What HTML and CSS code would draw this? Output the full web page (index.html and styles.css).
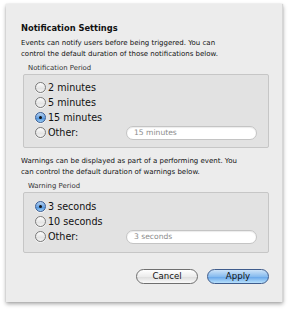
FILE: index.html
```html
<!DOCTYPE html>
<html>
<head>
<meta charset="utf-8">
<link rel="stylesheet" href="styles.css">
</head>
<body>
<div class="panel">
  <div class="title">Notification Settings</div>
  <div class="desc">Events can notify users before being triggered. You can<br>control the default duration of those notifications below.</div>
  <div class="label">Notification Period</div>
  <div class="box box1">
    <div class="row"><span class="radio"></span><span class="txt">2 minutes</span></div>
    <div class="row"><span class="radio"></span><span class="txt">5 minutes</span></div>
    <div class="row"><span class="radio on"></span><span class="txt">15 minutes</span></div>
    <div class="row"><span class="radio"></span><span class="txt">Other:</span><span class="field">15 minutes</span></div>
  </div>
  <div class="desc desc2">Warnings can be displayed as part of a performing event. You<br>can control the default duration of warnings below.</div>
  <div class="label">Warning Period</div>
  <div class="box box2">
    <div class="row"><span class="radio on"></span><span class="txt">3 seconds</span></div>
    <div class="row"><span class="radio"></span><span class="txt">10 seconds</span></div>
    <div class="row"><span class="radio"></span><span class="txt">Other:</span><span class="field">3 seconds</span></div>
  </div>
  <div class="buttons">
    <span class="btn">Cancel</span>
    <span class="btn primary">Apply</span>
  </div>
</div>
</body>
</html>
```
FILE: styles.css
```css
html, body {
  margin: 0;
  padding: 0;
  background: #ffffff;
}
body {
  width: 292px;
  height: 314px;
  overflow: hidden;
  font-family: "DejaVu Sans", "Liberation Sans", sans-serif;
  color: #111;
}
.panel {
  margin: 4px 9px 0 6px;
  height: 298px;
  box-sizing: border-box;
  padding: 18px 13px 0 15px;
  background: #ececec;
  border-right: 1px solid #d6d6d6;
  box-shadow: 0 2px 4px rgba(0,0,0,0.35), 0 0 1px rgba(0,0,0,0.15);
}
.title {
  font-weight: bold;
  font-size: 8.3px;
  line-height: 12px;
}
.desc {
  margin-top: 4px;
  font-size: 7px;
  line-height: 11px;
  white-space: nowrap;
}
.desc2 {
  margin-top: 8px;
}
.label {
  margin: 3px 0 0 7px;
  font-size: 6.9px;
  line-height: 10px;
  color: #333;
}
.box {
  margin: 1px 0 0 2px;
  background: #e2e2e2;
  border: 1px solid #c6c6c6;
  border-radius: 2px;
  padding: 5px 11px 7px 11px;
}
.box2 {
  padding: 6px 11px 8px 11px;
}
.row {
  display: flex;
  align-items: center;
  height: 15px;
}
.radio {
  width: 11px;
  height: 11px;
  box-sizing: border-box;
  border-radius: 50%;
  border: 1px solid #7a7a7a;
  background: linear-gradient(#fdfdfd, #e4e4e4 60%, #f4f4f4);
  flex: none;
  position: relative;
  box-shadow: 0 1px 0 rgba(255,255,255,0.6);
}
.radio.on {
  border-color: #3a5d94;
  background: linear-gradient(#b6d3f2, #6ea5e2 50%, #4d8fd9 55%, #9cd0f8);
}
.radio.on::after {
  content: "";
  position: absolute;
  left: 3px;
  top: 3px;
  width: 3px;
  height: 3px;
  border-radius: 50%;
  background: #111;
}
.txt {
  margin-left: 2px;
  font-size: 9.6px;
}
.field {
  margin-left: auto;
  width: 131px;
  height: 14px;
  box-sizing: border-box;
  border-radius: 7px;
  background: #fff;
  border: 1px solid #c4c4c4;
  box-shadow: inset 0 1px 1px rgba(0,0,0,0.08);
  color: #8c8c8c;
  font-size: 7.6px;
  line-height: 12px;
  padding-left: 7px;
}
.buttons {
  display: flex;
  justify-content: flex-end;
  gap: 9px;
  margin-top: 16px;
}
.btn {
  width: 62px;
  height: 15px;
  box-sizing: border-box;
  border-radius: 8px;
  border: 1px solid #6f6f6f;
  background: linear-gradient(#ffffff, #ececec 50%, #dedede 55%, #fafafa);
  font-size: 8.6px;
  line-height: 13px;
  text-align: center;
  color: #111;
}
.btn.primary {
  border-color: #3f5c8c;
  background: linear-gradient(#cde3f8, #88bcef 50%, #6aa8ea 55%, #b7e0fc);
}
```
